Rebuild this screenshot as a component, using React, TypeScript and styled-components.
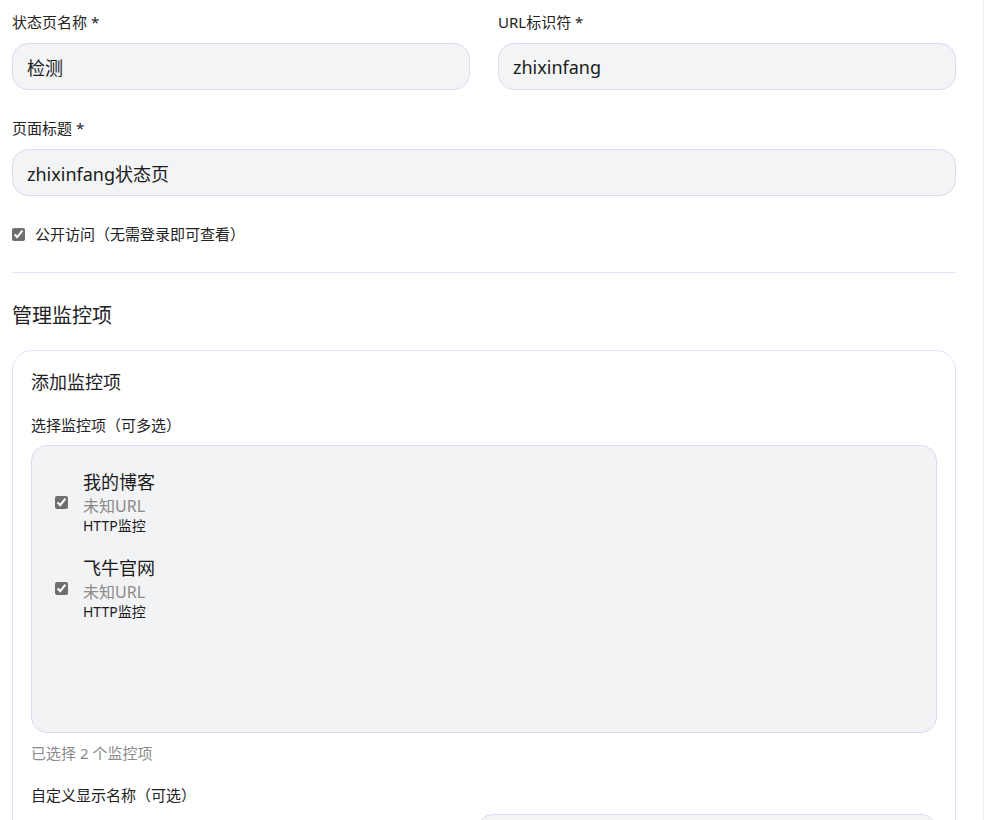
import React from "react";
import styled, { createGlobalStyle } from "styled-components";

const Global = createGlobalStyle`
  html, body { margin: 0; padding: 0; background: #fff; }
  body {
    font-family: "Noto Sans", "Noto Sans CJK SC", sans-serif;
    color: #1f1f1f;
    overflow: hidden;
  }
`;

const Page = styled.div`
  width: 984px;
  height: 820px;
  box-sizing: border-box;
  border-right: 1px solid #ececf4;
  padding: 11px 27px 0 12px;
  overflow: hidden;
`;

const Row = styled.div`
  display: grid;
  grid-template-columns: 1fr 1fr;
  gap: 28px;
`;

const Field = styled.div<{ $mb?: number }>`
  display: flex;
  flex-direction: column;
  margin-bottom: ${(p) => p.$mb ?? 0}px;
`;

const Label = styled.label`
  font-size: 15px;
  line-height: 22px;
  margin-bottom: 10px;
  color: #222;
`;

const Input = styled.input`
  box-sizing: border-box;
  height: 47px;
  width: 100%;
  border: 1px solid #dcdaf2;
  border-radius: 16px;
  background: #f3f4f6;
  padding: 0 14px;
  font-size: 18px;
  font-family: "Noto Sans", "Noto Sans CJK SC", sans-serif;
  color: #1a1a1a;
  outline: none;
`;

const CheckRow = styled.label`
  display: flex;
  align-items: center;
  gap: 10px;
  font-size: 15px;
  color: #222;
  margin-top: 27px;
  line-height: 22px;
`;

const Check = styled.input.attrs({ type: "checkbox" })`
  width: 13px;
  height: 13px;
  margin: 0;
  flex-shrink: 0;
  accent-color: #6f6f6f;
`;

const Divider = styled.hr`
  border: none;
  border-top: 1px solid #e4e1fa;
  margin: 27px 0 0;
`;

const SectionTitle = styled.h2`
  font-size: 20px;
  font-weight: 400;
  line-height: 28px;
  margin: 29px 0 20px;
  color: #222;
`;

const Card = styled.div`
  border: 1px solid #e4e1fa;
  border-radius: 20px;
  padding: 18px 18px 0;
  height: 600px;
`;

const CardTitle = styled.h3`
  font-size: 18px;
  font-weight: 400;
  line-height: 26px;
  margin: 0 0 19px;
  color: #222;
`;

const SubLabel = styled.div`
  font-size: 15px;
  line-height: 22px;
  margin-bottom: 9px;
  color: #222;
`;

const ListBox = styled.div`
  box-sizing: border-box;
  height: 288px;
  border: 1px solid #dcdaf2;
  border-radius: 16px;
  background: #f2f3f5;
  padding: 13px 23px;
`;

const Item = styled.label`
  display: flex;
  align-items: center;
  gap: 15px;
  padding: 10px 0;
`;

const ItemText = styled.div`
  display: flex;
  flex-direction: column;
`;

const ItemName = styled.span`
  font-size: 18px;
  line-height: 26px;
  color: #1a1a1a;
`;

const ItemUrl = styled.span`
  font-size: 16px;
  line-height: 22px;
  color: #8a8a8a;
`;

const ItemType = styled.span`
  font-size: 14px;
  line-height: 18px;
  color: #1a1a1a;
`;

const Hint = styled.div`
  font-size: 15px;
  line-height: 22px;
  color: #8a8a8a;
  margin-top: 9px;
`;

const CustomLabel = styled.div`
  font-size: 15px;
  line-height: 22px;
  color: #222;
  margin-top: 20px;
`;

const NameRow = styled.div`
  display: grid;
  grid-template-columns: 1fr 460px;
  gap: 16px;
  margin-top: 8px;
  align-items: start;
`;

const NameSlot = styled.div`
  min-height: 47px;
`;

const monitors = [
  { name: "我的博客", url: "未知URL", type: "HTTP监控" },
  { name: "飞牛官网", url: "未知URL", type: "HTTP监控" },
];

export default function App() {
  return (
    <>
      <Global />
      <Page>
        <Row>
          <Field $mb={27}>
            <Label>状态页名称 *</Label>
            <Input defaultValue="检测" />
          </Field>
          <Field $mb={27}>
            <Label>URL标识符 *</Label>
            <Input defaultValue="zhixinfang" />
          </Field>
        </Row>
        <Field>
          <Label>页面标题 *</Label>
          <Input defaultValue="zhixinfang状态页" />
        </Field>
        <CheckRow>
          <Check defaultChecked />
          公开访问（无需登录即可查看）
        </CheckRow>
        <Divider />
        <SectionTitle>管理监控项</SectionTitle>
        <Card>
          <CardTitle>添加监控项</CardTitle>
          <SubLabel>选择监控项（可多选）</SubLabel>
          <ListBox>
            {monitors.map((m) => (
              <Item key={m.name}>
                <Check defaultChecked />
                <ItemText>
                  <ItemName>{m.name}</ItemName>
                  <ItemUrl>{m.url}</ItemUrl>
                  <ItemType>{m.type}</ItemType>
                </ItemText>
              </Item>
            ))}
          </ListBox>
          <Hint>已选择 2 个监控项</Hint>
          <CustomLabel>自定义显示名称（可选）</CustomLabel>
          <NameRow>
            <NameSlot />
            <Input placeholder="" />
          </NameRow>
        </Card>
      </Page>
    </>
  );
}
